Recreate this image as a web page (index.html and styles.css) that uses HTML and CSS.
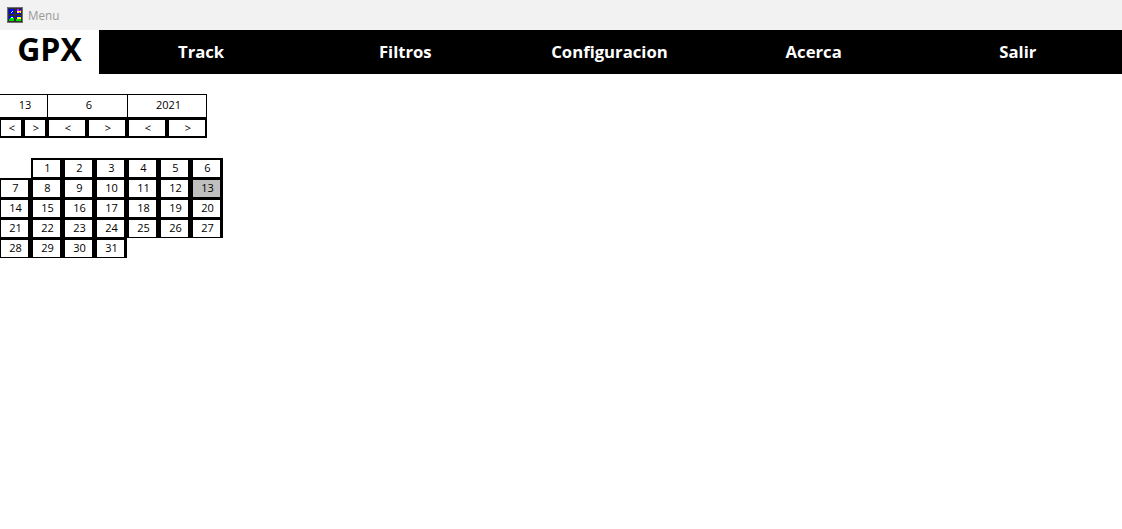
FILE: index.html
```html
<!DOCTYPE html>
<html lang="en">
<head>
    <meta charset="UTF-8">
    <meta name="viewport" content="width=device-width, initial-scale=1.0">
    <title>Menu</title>
    <link rel="stylesheet" href="styles.css">
</head>
<body>
    <!-- Window title bar -->
    <div class="titlebar">
        <svg class="app-icon" width="16" height="16" viewBox="0 0 16 16" shape-rendering="crispEdges">
            <rect width="16" height="16" fill="#707070"/>
            <rect x="1" y="1" width="14" height="14" fill="#303030"/>
            <rect x="2" y="2" width="5" height="5" fill="#0000ff"/>
            <rect x="9" y="2" width="5" height="5" fill="#0000ff"/>
            <rect x="2" y="9" width="5" height="5" fill="#0000ff"/>
            <rect x="9" y="9" width="5" height="5" fill="#0000ff"/>
            <rect x="5" y="4" width="1" height="1" fill="#ffff00"/>
            <rect x="4" y="5" width="1" height="1" fill="#ffff00"/>
            <rect x="10" y="2" width="2" height="2" fill="#ff00ff"/>
            <rect x="13" y="3" width="1" height="1" fill="#ff00ff"/>
            <rect x="10" y="4" width="4" height="2" fill="#ffff00"/>
            <rect x="12" y="5" width="1" height="1" fill="#ff00ff"/>
            <rect x="4" y="10" width="2" height="1" fill="#ffffff"/>
            <rect x="3" y="11" width="4" height="1" fill="#00ff00"/>
            <rect x="2" y="12" width="5" height="2" fill="#00d000"/>
            <rect x="10" y="10" width="4" height="2" fill="#ffff00"/>
            <rect x="9" y="12" width="5" height="2" fill="#00e000"/>
        </svg>
        <span class="titlebar-text">Menu</span>
    </div>

    <ul class="menu">
        <li class="logo">GPX</li>
        <li><a href="#">Track</a></li>
        <li><a href="#">Filtros</a></li>
        <li><a href="#">Configuracion</a></li>
        <li><a href="#">Acerca</a></li>
        <li><a href="#">Salir</a></li>
    </ul>

    <!-- Date selector -->
    <div class="date-picker">
        <div class="date-value">13</div>
        <div class="date-value">6</div>
        <div class="date-value last">2021</div>
    </div>
    <div class="date-buttons">
        <button class="small">&lt;</button>
        <button class="small">&gt;</button>
        <button>&lt;</button>
        <button>&gt;</button>
        <button>&lt;</button>
        <button>&gt;</button>
    </div>

    <!-- Month days -->
    <div class="calendar">
        <button class="day first">1</button>
        <button class="day">2</button>
        <button class="day">3</button>
        <button class="day">4</button>
        <button class="day">5</button>
        <button class="day">6</button>
        <button class="day">7</button>
        <button class="day">8</button>
        <button class="day">9</button>
        <button class="day">10</button>
        <button class="day">11</button>
        <button class="day">12</button>
        <button class="day today">13</button>
        <button class="day">14</button>
        <button class="day">15</button>
        <button class="day">16</button>
        <button class="day">17</button>
        <button class="day">18</button>
        <button class="day">19</button>
        <button class="day">20</button>
        <button class="day">21</button>
        <button class="day">22</button>
        <button class="day">23</button>
        <button class="day">24</button>
        <button class="day">25</button>
        <button class="day">26</button>
        <button class="day">27</button>
        <button class="day">28</button>
        <button class="day">29</button>
        <button class="day">30</button>
        <button class="day">31</button>
    </div>
</body>
</html>
```

FILE: styles.css
```css
body {
  margin: 0;
  background-color: white;
  font-family: "Open Sans", sans-serif;
  overflow: hidden;
}

.titlebar {
  display: flex;
  align-items: center;
  gap: 5px;
  height: 30px;
  padding-left: 7px;
  background-color: #f2f2f2;
}

.titlebar-text {
  padding-bottom: 1px;
  font-size: 11.7px;
  color: #999;
}

.menu {
  display: grid;
  grid-template-columns: 99px repeat(5, 204.2px);
  grid-template-rows: 44px;
  margin: 0;
  padding: 0;
  list-style-type: none;
  background-color: black;
}

.menu li {
  display: flex;
  align-items: center;
  justify-content: center;
}

.menu a {
  padding-bottom: 2px;
  color: white;
  font-size: 16.7px;
  font-weight: 700;
  text-decoration: none;
}

.menu .logo {
  box-sizing: border-box;
  padding-bottom: 6px;
  background-color: white;
  color: black;
  font-size: 32px;
  font-weight: 700;
  line-height: 1;
}

.date-picker {
  display: grid;
  grid-template-columns: 48px 80px 80px;
  width: 208px;
  margin: 20px 0 0 -1px;
}

.date-value {
  height: 22px;
  padding-left: 3px;
  border-top: 1px solid black;
  border-bottom: 1px solid black;
  border-left: 1px solid black;
  font-size: 11px;
  line-height: 20px;
  text-align: center;
}

.date-value.last {
  border-right: 1px solid black;
}

.date-buttons {
  display: grid;
  grid-template-columns: 24px 24px repeat(4, 40px);
  width: 208px;
  margin-left: -1px;
}

button {
  height: 20px;
  padding: 0 0 2px 2px;
  border: 2px solid black;
  background-color: white;
  color: black;
  font-family: "Open Sans", sans-serif;
  font-size: 11px;
}

.calendar {
  display: grid;
  grid-template-columns: repeat(7, 32px);
  grid-auto-rows: 20px;
  margin: 20px 0 0 -1px;
}

.day {
  padding: 0 0 3px 2px;
  border-width: 2px 3px 1px 2px;
}

.day.first {
  grid-column-start: 2;
}

.day.today {
  background-color: #bfbfbf;
}
```
